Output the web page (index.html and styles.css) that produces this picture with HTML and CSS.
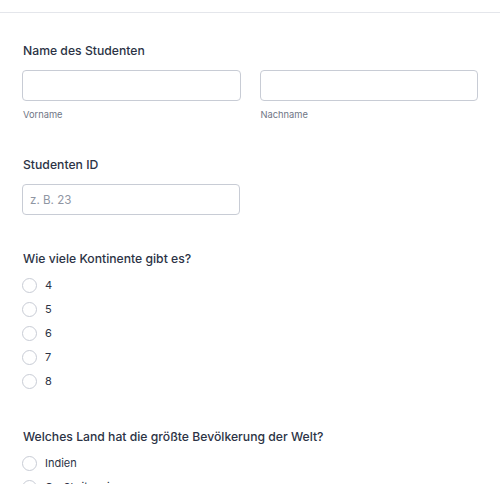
FILE: index.html
```html
<!DOCTYPE html>
<html lang="de">
<head>
<meta charset="utf-8">
<link rel="stylesheet" href="styles.css">
</head>
<body>
<div class="topbar"></div>
<form class="form">
  <section class="field field-first">
    <div class="label">Name des Studenten</div>
    <div class="name-row">
      <div class="name-col">
        <input class="input" type="text">
        <div class="sublabel">Vorname</div>
      </div>
      <div class="name-col">
        <input class="input" type="text">
        <div class="sublabel">Nachname</div>
      </div>
    </div>
  </section>
  <section class="field field-id">
    <div class="label">Studenten ID</div>
    <div class="half">
      <input class="input" type="text" placeholder="z. B. 23">
    </div>
  </section>
  <section class="field field-q">
    <div class="label">Wie viele Kontinente gibt es?</div>
    <div class="options">
      <label class="option"><span class="radio"></span><span>4</span></label>
      <label class="option"><span class="radio"></span><span>5</span></label>
      <label class="option"><span class="radio"></span><span>6</span></label>
      <label class="option"><span class="radio"></span><span>7</span></label>
      <label class="option"><span class="radio"></span><span>8</span></label>
    </div>
  </section>
  <section class="field field-q">
    <div class="label">Welches Land hat die größte Bevölkerung der Welt?</div>
    <div class="options">
      <label class="option"><span class="radio"></span><span>Indien</span></label>
      <label class="option"><span class="radio"></span><span>Großbritannien</span></label>
    </div>
  </section>
</form>
</body>
</html>
```

FILE: styles.css
```css
html, body {
  margin: 0;
  padding: 0;
  background: #ffffff;
}
body {
  font-family: Inter, "Noto Sans", "Liberation Sans", sans-serif;
  color: #2c3345;
  width: 500px;
  height: 484px;
  overflow: hidden;
}
.topbar {
  height: 12px;
  border-bottom: 1px solid #e4e6eb;
}
.form {
  padding: 0 22px;
}
.field-first {
  padding-top: 28px;
}
.field-id {
  padding-top: 32px;
}
.field-q {
  padding-top: 34px;
}
.label {
  font-size: 12.2px;
  line-height: 20px;
  font-weight: 500;
  color: #2c3345;
  padding-left: 1px;
}
.name-row {
  display: flex;
  gap: 19px;
  margin-top: 9px;
}
.name-col {
  flex: 1;
  display: flex;
  flex-direction: column;
}
.half {
  width: 218px;
  margin-top: 9px;
}
.input {
  box-sizing: border-box;
  width: 100%;
  height: 31px;
  border: 1px solid #c8ccd5;
  border-radius: 4px;
  padding: 0 7px;
  font-family: inherit;
  font-size: 11.6px;
  color: #2c3345;
  background: #fff;
  margin: 0;
}
.input::placeholder {
  color: #8f96a3;
}
.sublabel {
  margin-top: 6px;
  font-size: 9.3px;
  line-height: 16px;
  color: #6f7685;
  padding-left: 1px;
}
.options {
  margin-top: 4px;
  display: flex;
  flex-direction: column;
}
.option {
  display: flex;
  align-items: center;
  gap: 8px;
  height: 24px;
  font-size: 11px;
  color: #2c3345;
}
.radio {
  box-sizing: border-box;
  width: 15px;
  height: 15px;
  border: 1px solid #c8ccd5;
  border-radius: 50%;
  background: #fff;
  flex: none;
}
```
